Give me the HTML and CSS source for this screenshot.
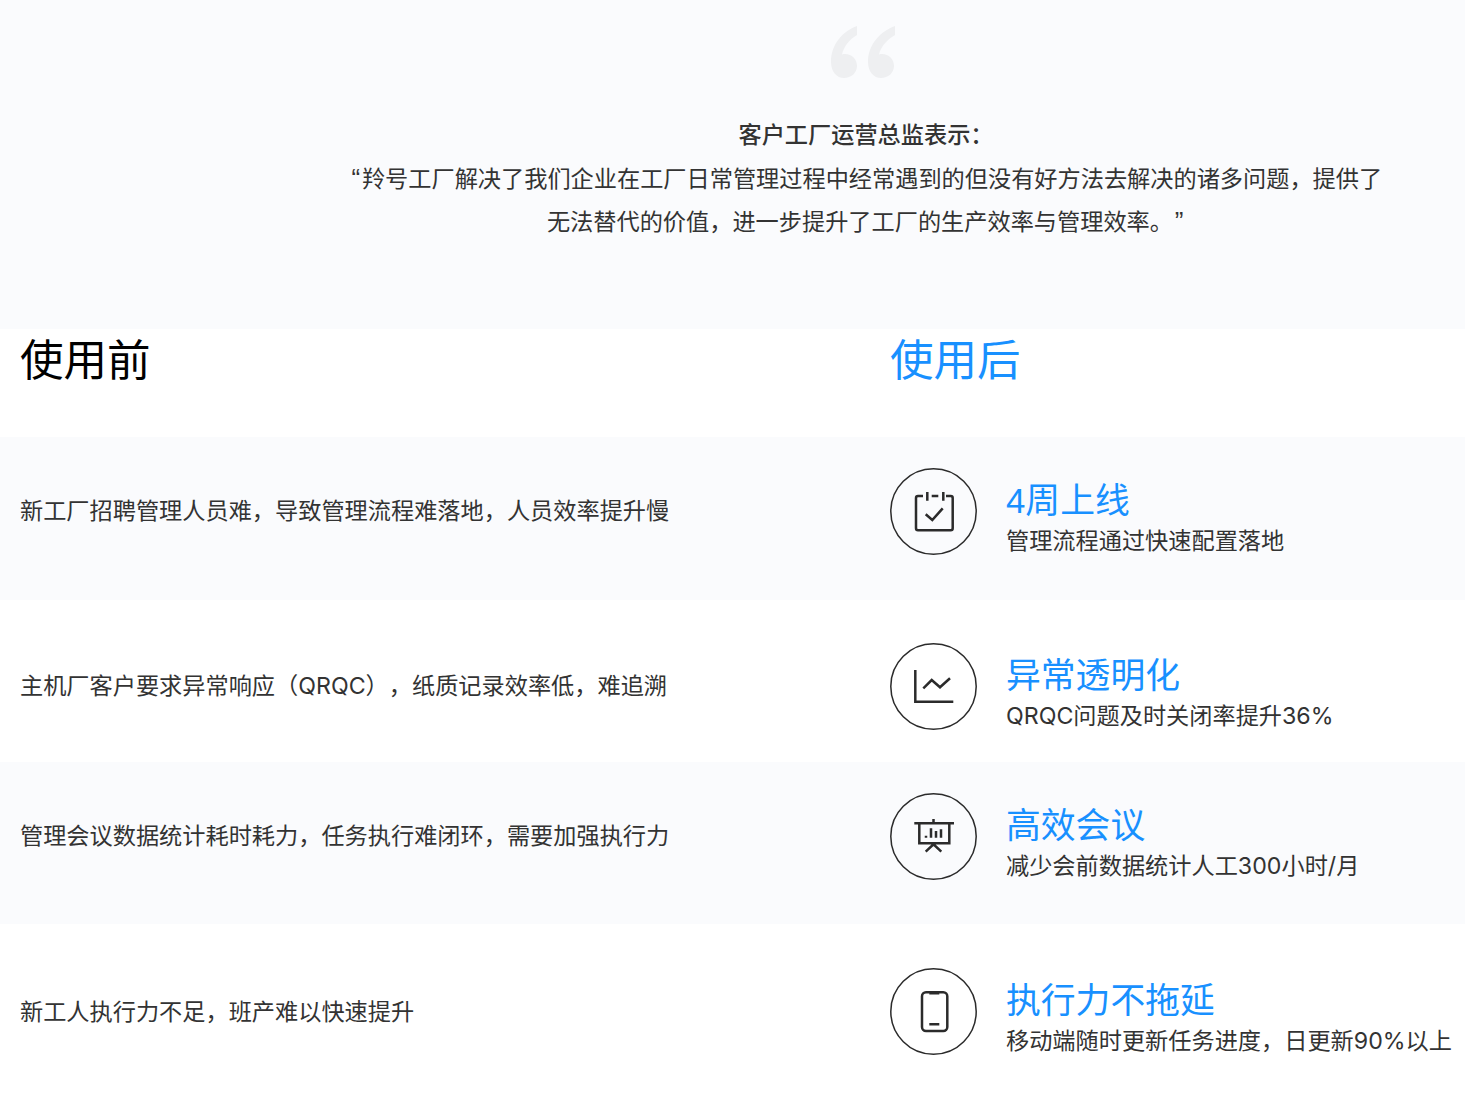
FILE: index.html
```html
<!DOCTYPE html>
<html lang="zh-CN">
<head>
<meta charset="utf-8">
<title>羚号工厂</title>
<link rel="stylesheet" href="styles.css">
</head>
<body>
<section class="quote">
  <svg class="quote-mark" viewBox="0 0 66 54" width="66" height="54"><path d="M27 1C13 6 1 19 1 37c0 10 6 16 13 16 7 0 13-5 13-12s-5-12-12-12c-1 0-2 0-3 .4C14 21 20 14 27 10zM65 1C51 6 38 19 38 37c0 10 6 16 13 16 7 0 13-5 13-12s-5-12-12-12c-1 0-2 0-3 .4C51 21 58 14 65 10z"/></svg>
  <div class="quote-body">
    <p class="quote-author">客户工厂运营总监表示：</p>
    <p class="quote-text"><span class="qm">“</span>羚号工厂解决了我们企业在工厂日常管理过程中经常遇到的但没有好方法去解决的诸多问题，提供了<br>无法替代的价值，进一步提升了工厂的生产效率与管理效率。<span class="qm">”</span></p>
  </div>
</section>
<section class="heads">
  <h2 class="head">使用前</h2>
  <h2 class="head head-after">使用后</h2>
</section>
<section class="row row-tint row-first">
  <p class="before">新工厂招聘管理人员难，导致管理流程难落地，人员效率提升慢</p>
  <div class="after">
    <svg viewBox="0 0 87 87" width="87" height="87" class="icon"><circle cx="43.500" cy="43.500" r="42.700" class="ring"/><path d="M33 28h-5a2 2 0 0 0-2 2v30.300a2 2 0 0 0 2 2h32.700a2 2 0 0 0 2-2V30a2 2 0 0 0-2-2H56M37.300 24v8.700M53.300 24v8.700M41.700 28h6.600M35.700 46.300l6.600 5.700 10.400-11.700"/></svg>
    <div class="copy"><h3 class="title">4周上线</h3><p class="desc">管理流程通过快速配置落地</p></div>
  </div>
</section>
<section class="row row-b">
  <p class="before">主机厂客户要求异常响应（QRQC），纸质记录效率低，难追溯</p>
  <div class="after">
    <svg viewBox="0 0 87 87" width="87" height="87" class="icon"><circle cx="43.500" cy="43.500" r="42.700" class="ring"/><path d="M25.300 27v31.700h38M33.300 45.300l8.400-8.300 8.300 7.300 10-9"/></svg>
    <div class="copy"><h3 class="title">异常透明化</h3><p class="desc">QRQC问题及时关闭率提升36%</p></div>
  </div>
</section>
<section class="row row-tint">
  <p class="before">管理会议数据统计耗时耗力，任务执行难闭环，需要加强执行力</p>
  <div class="after">
    <svg viewBox="0 0 87 87" width="87" height="87" class="icon"><circle cx="43.500" cy="43.500" r="42.700" class="ring"/><path d="M24.300 30.300H64M43.500 26v4.300M29.300 30.300v20h30v-20M35.700 58.700l7.800-7.400 7.800 7.400M36 42.700v2M41 35.300v9.400M46 38v6.700M51 36.300v8.400"/></svg>
    <div class="copy"><h3 class="title">高效会议</h3><p class="desc">减少会前数据统计人工300小时/月</p></div>
  </div>
</section>
<section class="row row-last">
  <p class="before">新工人执行力不足，班产难以快速提升</p>
  <div class="after">
    <svg viewBox="0 0 87 87" width="87" height="87" class="icon"><circle cx="43.500" cy="43.500" r="42.700" class="ring"/><path d="M36 24.300h17.300a4 4 0 0 1 4 4V59a4 4 0 0 1-4 4H36a4 4 0 0 1-4-4V28.300a4 4 0 0 1 4-4zM39.300 25.300h10M39.300 56.300h10"/></svg>
    <div class="copy"><h3 class="title">执行力不拖延</h3><p class="desc">移动端随时更新任务进度，日更新90%以上</p></div>
  </div>
</section>
</body>
</html>
```
FILE: styles.css
```css
* { box-sizing: border-box; }
html, body { margin: 0; padding: 0; }
body {
  font-family: Inter, "Noto Sans CJK SC", sans-serif;
  text-spacing-trim: space-all;
  color: #333;
  background: #fff;
  overflow-x: hidden;
}
p, h2, h3 { margin: 0; font-weight: 400; }
.quote {
  height: 329px;
  background: #fafbfd;
  padding: 25px 0 0 267px;
  display: flex;
  flex-direction: column;
  align-items: center;
}
.quote-mark { fill: #eeeff1; display: block; flex: none; margin-right: 6px; }
.quote-body {
  width: 1044px;
  margin-top: 35px;
  text-align: center;
  font-size: 23.2px;
  line-height: 43.5px;
}
.quote-author { font-weight: 500; }
.qm {
  font-family: "Liberation Sans", sans-serif;
  font-size: 26px;
  line-height: 0;
  margin: 0 1.7px;
}
.heads { display: flex; height: 108px; padding-top: 4px; }
.head {
  flex: none;
  width: 870px;
  padding-left: 20px;
  font-size: 43.5px;
  line-height: 54px;
  color: #000;
}
.head-after { color: #1890ff; width: 595px; }
.row {
  display: flex;
  align-items: flex-start;
  height: 162px;
  padding-top: 31px;
}
.row-first { height: 163px; }
.row-b { padding-top: 43px; }
.row-last { height: 174px; padding-top: 44px; }
.row-tint { background: #fafbfd; }
.before {
  flex: none;
  width: 870px;
  height: 87px;
  padding: 0 0 2px 20px;
  display: flex;
  align-items: center;
  font-size: 23.2px;
  line-height: 32px;
  color: #333;
}
.row-last .before { padding-bottom: 0; }
.after { display: flex; align-items: flex-start; margin-left: 20px; white-space: nowrap; }
.icon { flex: none; fill: none; stroke: #2b2b2b; stroke-width: 2.500; margin-right: 29px; }
.ring { stroke-width: 1.500; }
.copy { padding-top: 10px; }
.title {
  font-family: "Liberation Sans", "Noto Sans CJK SC", sans-serif;
  font-size: 34.8px;
  line-height: 46px;
  color: #1890ff;
}
.desc { font-size: 23.2px; line-height: 32px; margin-top: 1px; color: #333; }
```
